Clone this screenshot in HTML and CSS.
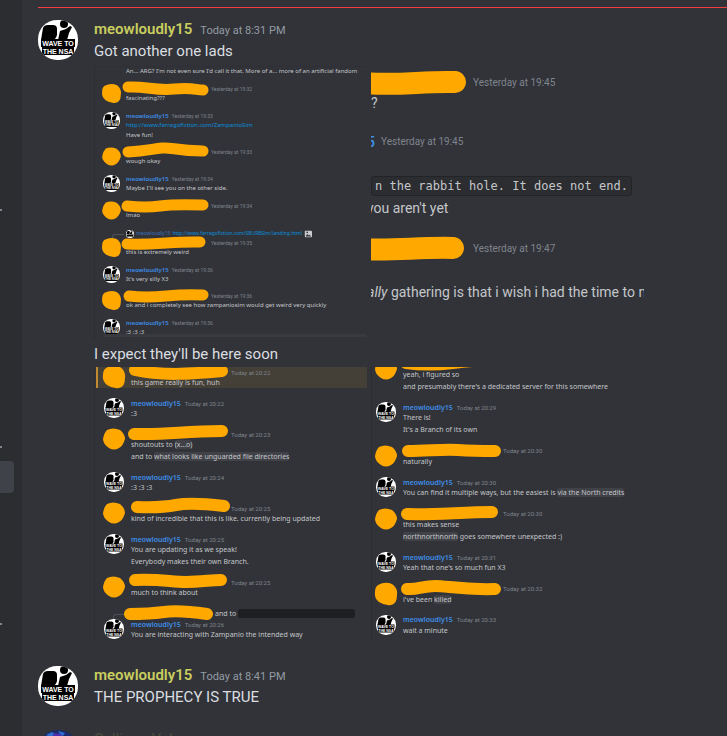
FILE: index.html
```
<!DOCTYPE html>
<html lang="en">
<head>
  <meta charset="UTF-8">
  <title>Chat</title>
  <link rel="stylesheet" href="styles.css">
</head>
<body>

  <!-- shared drawings -->
  <svg class="defs" aria-hidden="true">
    <symbol id="nsa" viewBox="0 0 40 40">
      <clipPath id="round"><rect width="40" height="40" rx="19"/></clipPath>
      <g clip-path="url(#round)">
        <rect width="40" height="40" fill="#fff"/>
        <path d="M5 8q1-3 5-3h5q4 0 4 4v6q-1 4-4 5H3z" fill="#000"/>
        <circle cx="26" cy="4" r="4" fill="#000"/>
        <path d="M20 20l2-9 6-2 4-3 2 1-3 6-2 7z" fill="#000"/>
        <path d="M3 19h34v8h-1v8H4v-8H3z" fill="#000"/>
        <text x="20" y="26" class="nsa-text">WAVE TO</text>
        <text x="20" y="34" class="nsa-text">THE NSA</text>
      </g>
    </symbol>
    <symbol id="blob-a" viewBox="0 0 20 20" overflow="visible">
      <path d="M2 1Q9-3 16 0q6 4 5 11 0 9-6 10-6 1-12-3-5-4-4-10Q-1 3 2 1z"/>
    </symbol>
    <symbol id="blob-b" viewBox="0 0 20 20" overflow="visible">
      <path d="M3 1q6-3 13 0 5 4 5 9-2 7-6 9-5 3-10 0-6-4-6-9 1-6 4-9z"/>
    </symbol>
  </svg>

  <nav class="sidebar">
    <span class="tick"></span>
    <span class="tick"></span>
    <span class="selected"></span>
    <span class="tick"></span>
  </nav>

  <main class="chat">
    <hr class="divider">

    <article class="message">
      <svg class="avatar"><use href="#nsa"/></svg>
      <div class="body">
        <header class="head"><b class="name">meowloudly15</b><time>Today at 8:31 PM</time></header>
        <p>Got another one lads</p>
        <div class="gallery">

          <figure class="shot shot-small">
            <p class="line">An... ARG? I'm not even sure I'd call it that. More of a... more of an artificial fandom</p>
            <div class="row">
              <svg class="pic ink"><use href="#blob-a"/></svg>
              <div>
                <div class="top"><svg class="scribble"><path d="M2 2C20 1 30 6 48 4S70 5 77 5"/></svg><time>Yesterday at 19:32</time></div>
                <p>fascinating???</p>
              </div>
            </div>
            <div class="row">
              <svg class="pic"><use href="#nsa"/></svg>
              <div>
                <div class="top"><b>meowloudly15</b><time>Yesterday at 19:33</time></div>
                <p><a href="#">http://www.farragofiction.com/ZampanioSim</a></p>
                <p>Have fun!</p>
              </div>
            </div>
            <div class="row">
              <svg class="pic ink"><use href="#blob-b"/></svg>
              <div>
                <div class="top"><svg class="scribble"><path d="M2 4C20 3 26 1 36 0S50 3 77 3"/></svg><time>Yesterday at 19:33</time></div>
                <p>wough okay</p>
              </div>
            </div>
            <div class="row">
              <svg class="pic"><use href="#nsa"/></svg>
              <div>
                <div class="top"><b>meowloudly15</b><time>Yesterday at 19:34</time></div>
                <p>Maybe I'll see you on the other side.</p>
              </div>
            </div>
            <div class="row">
              <svg class="pic ink"><use href="#blob-b"/></svg>
              <div>
                <div class="top"><svg class="scribble"><path d="M1 4Q20 6 34 4T77 3"/></svg><time>Yesterday at 19:34</time></div>
                <p>lmao</p>
              </div>
            </div>
            <div class="thread">
              <div class="reply">
                <span class="elbow"></span>
                <svg class="mini"><use href="#nsa"/></svg>
                <b>meowloudly15</b>
                <a href="#">http://www.farragofiction.com/SBURBSim/landing.html</a>
                <svg class="mini" viewBox="0 0 10 10"><rect x="1" y="1" width="9" height="8" rx="1" fill="#c9cbd0"/><path d="M2 8l2-3 2 2 1-1 2 2z" fill="#313338"/><circle cx="4" cy="3" r="1" fill="#313338"/></svg>
              </div>
              <div class="row">
                <svg class="pic ink"><use href="#blob-a"/></svg>
                <div>
                  <div class="top"><svg class="scribble"><path d="M1 5C30 6 50 2 74 3"/></svg><time>Yesterday at 19:35</time></div>
                  <p>this is extremely weird</p>
                </div>
              </div>
            </div>
            <div class="row">
              <svg class="pic"><use href="#nsa"/></svg>
              <div>
                <div class="top"><b>meowloudly15</b><time>Yesterday at 19:36</time></div>
                <p>It's very silly X3</p>
              </div>
            </div>
            <div class="row">
              <svg class="pic ink"><use href="#blob-a"/></svg>
              <div>
                <div class="top"><svg class="scribble"><path d="M3 4Q20 6 40 4T77 3"/></svg><time>Yesterday at 19:36</time></div>
                <p>ok and i completely see how zampaniosim would get weird very quickly</p>
              </div>
            </div>
            <div class="row">
              <svg class="pic"><use href="#nsa"/></svg>
              <div>
                <div class="top"><b>meowloudly15</b><time>Yesterday at 19:36</time></div>
                <p>:3 :3 :3</p>
              </div>
            </div>
            <div class="typebar"></div>
          </figure>

          <figure class="shot shot-large">
            <div class="top"><svg class="scribble"><path d="M-10 18C30 21 50 16 84 17"/></svg><time>Yesterday at 19:45</time></div>
            <p>?</p>
            <div class="top second"><b class="cut">5</b><time>Yesterday at 19:45</time></div>
            <code>n the rabbit hole. It does not end.</code>
            <p class="cut">you aren't yet</p>
            <div class="top third"><svg class="scribble"><path d="M-10 18C20 20 50 16 82 17"/></svg><time>Yesterday at 19:47</time></div>
            <p class="cut last"><i>ally</i> gathering is that i wish i had the time to n</p>
          </figure>
        </div>

        <p>I expect they'll be here soon</p>
        <div class="gallery">

          <figure class="shot shot-mid">
            <div class="row mention">
              <svg class="pic ink"><use href="#blob-a"/></svg>
              <div>
                <div class="top"><svg class="scribble"><path d="M4 3C30 9 60 7 91 4"/></svg><time>Today at 20:22</time></div>
                <p>this game really is fun, huh</p>
              </div>
            </div>
            <div class="row">
              <svg class="pic"><use href="#nsa"/></svg>
              <div>
                <div class="top"><b>meowloudly15</b><time>Today at 20:22</time></div>
                <p>:3</p>
              </div>
            </div>
            <div class="row">
              <svg class="pic ink"><use href="#blob-b"/></svg>
              <div>
                <div class="top"><svg class="scribble"><path d="M3 5C40 6 50 2 91 2"/></svg><time>Today at 20:23</time></div>
                <p>shoutouts to <mark>(x...o)</mark></p>
                <p>and to <mark>what looks like unguarded file directories</mark></p>
              </div>
            </div>
            <div class="row">
              <svg class="pic"><use href="#nsa"/></svg>
              <div>
                <div class="top"><b>meowloudly15</b><time>Today at 20:24</time></div>
                <p>:3 :3 :3</p>
              </div>
            </div>
            <div class="row">
              <svg class="pic ink"><use href="#blob-b"/></svg>
              <div>
                <div class="top"><svg class="scribble"><path d="M6 4Q30 5 45 2T93 3"/></svg><time>Today at 20:25</time></div>
                <p>kind of incredible that this is like. currently being updated</p>
              </div>
            </div>
            <div class="row">
              <svg class="pic"><use href="#nsa"/></svg>
              <div>
                <div class="top"><b>meowloudly15</b><time>Today at 20:25</time></div>
                <p>You are updating it as we speak!</p>
                <p>Everybody makes their own Branch.</p>
              </div>
            </div>
            <div class="row">
              <svg class="pic ink"><use href="#blob-b"/></svg>
              <div>
                <div class="top"><svg class="scribble"><path d="M4 3C30 2 40 5 55 5S80 3 90 3"/></svg><time>Today at 20:25</time></div>
                <p>much to think about</p>
              </div>
            </div>
            <div class="thread">
              <div class="reply">
                <span class="elbow"></span>
                <svg class="scribble"><path d="M1 5Q20 5 35 3T78 5"/></svg>
                <span>and to</span>
                <span class="spoiler"></span>
              </div>
              <div class="row">
                <svg class="pic"><use href="#nsa"/></svg>
                <div>
                  <div class="top"><b>meowloudly15</b><time>Today at 20:26</time></div>
                  <p>You are interacting with Zampanio the intended way</p>
                </div>
              </div>
            </div>
          </figure>

          <figure class="shot shot-mid shot-right">
            <div class="row">
              <svg class="pic ink"><use href="#blob-b"/></svg>
              <div>
                <div class="top"><svg class="scribble"><path d="M3 4Q25 7 50 4T90 1"/></svg></div>
                <p>yeah, i figured so</p>
                <p>and presumably there's a dedicated server for this somewhere</p>
              </div>
            </div>
            <div class="row">
              <svg class="pic"><use href="#nsa"/></svg>
              <div>
                <div class="top"><b>meowloudly15</b><time>Today at 20:29</time></div>
                <p>There is!</p>
                <p>It's a Branch of its own</p>
              </div>
            </div>
            <div class="row">
              <svg class="pic ink"><use href="#blob-b"/></svg>
              <div>
                <div class="top"><svg class="scribble"><path d="M5 5C25 5 40 3 55 4S80 5 92 5"/></svg><time>Today at 20:30</time></div>
                <p>naturally</p>
              </div>
            </div>
            <div class="row">
              <svg class="pic"><use href="#nsa"/></svg>
              <div>
                <div class="top"><b>meowloudly15</b><time>Today at 20:30</time></div>
                <p>You can find it multiple ways, but the easiest is <mark>via the North credits</mark></p>
              </div>
            </div>
            <div class="row">
              <svg class="pic ink"><use href="#blob-b"/></svg>
              <div>
                <div class="top"><svg class="scribble"><path d="M4 5C30 6 60 3 89 3"/></svg><time>Today at 20:30</time></div>
                <p>this makes sense</p>
                <p><mark>northnorthnorth</mark> goes somewhere unexpected :)</p>
              </div>
            </div>
            <div class="row">
              <svg class="pic"><use href="#nsa"/></svg>
              <div>
                <div class="top"><b>meowloudly15</b><time>Today at 20:31</time></div>
                <p>Yeah that one's so much fun X3</p>
              </div>
            </div>
            <div class="row">
              <svg class="pic ink"><use href="#blob-a"/></svg>
              <div>
                <div class="top"><svg class="scribble"><path d="M4 5C14 6 20 2 32 2S60 6 92 5"/></svg><time>Today at 20:32</time></div>
                <p>i've been <mark>killed</mark></p>
              </div>
            </div>
            <div class="row">
              <svg class="pic"><use href="#nsa"/></svg>
              <div>
                <div class="top"><b>meowloudly15</b><time>Today at 20:33</time></div>
                <p>wait a minute</p>
              </div>
            </div>
          </figure>
        </div>
      </div>
    </article>

    <article class="message">
      <svg class="avatar"><use href="#nsa"/></svg>
      <div class="body">
        <header class="head"><b class="name">meowloudly15</b><time>Today at 8:41 PM</time></header>
        <p>THE PROPHECY IS TRUE</p>
      </div>
    </article>

    <article class="message">
      <svg class="avatar" viewBox="0 0 40 40"><circle cx="20" cy="20" r="20" fill="#1c2a6e"/><path d="M8 5l6-3 4 3-5 2zM20 1l7 2-3 4z" fill="#2f6fd0"/><path d="M16 3l6 1 4 3H14z" fill="#4a2fb0"/></svg>
      <div class="body">
        <header class="head"><span class="name dim">Calliope Valmer</span></header>
      </div>
    </article>
  </main>

</body>
</html>
```

FILE: styles.css
```
* { box-sizing: border-box; }
body {
  margin: 0;
  height: 100vh;
  overflow: hidden;
  display: flex;
  background: #313338;
  color: #dbdee1;
  font: 15px/22px Roboto, sans-serif;
}
p, figure { margin: 0; }
a { color: #0a8fdc; text-decoration: none; }
.defs { position: absolute; width: 0; height: 0; }
.nsa-text {
  font: bold 7px "Liberation Sans", sans-serif;
  fill: #fff;
  text-anchor: middle;
}

/* channel list edge */
.sidebar {
  flex: none;
  width: 22px;
  padding-top: 209px;
  display: flex;
  flex-direction: column;
  background: #2b2d31;
}
.tick { width: 2px; height: 2px; background: #80848e; }
.tick + .tick { margin-top: 235px; }
.selected { width: 14px; height: 32px; margin: 13px 0 130px; background: #404249; border-radius: 0 4px 4px 0; }

/* messages */
.chat { flex: 1; min-width: 0; padding-left: 16px; overflow: hidden; }
.divider { height: 1px; margin: 7px 0 10px; border: 0; background: #f23f43; }
.message { display: flex; gap: 16px; margin-bottom: 20px; }
.avatar { flex: none; width: 40px; height: 40px; margin-top: 2px; }
.body { flex: 1; max-width: 550px; }
.head { display: flex; align-items: baseline; gap: 8px; height: 22px; }
.name { font-weight: 600; color: #c9cd5f; }
.name.dim { font-weight: 400; color: #4b4d3b; }
.head time { font-size: 11px; color: #949ba4; }

/* pictures */
.gallery { display: grid; grid-template-columns: 1fr 1fr; gap: 4px; padding: 4px 0; }
.gallery + p + .gallery { padding-top: 2px; }
.shot { aspect-ratio: 1; overflow: hidden; white-space: nowrap; color: #c4c6ca; }
.shot b { color: #3f8ee8; font-weight: 600; }
.shot time { color: #80848e; font-family: Roboto, sans-serif; }
.shot mark { background: #404248; color: inherit; border-radius: 2px; }
.ink, .scribble { fill: #ffa800; overflow: visible; }
.scribble path { fill: none; stroke: #ffa800; stroke-linecap: round; stroke-linejoin: round; }

.shot-small, .shot-mid {
  display: flex;
  flex-direction: column;
  justify-content: space-between;
  border-left: 1px solid #2b2d31;
  font-family: "Noto Sans", sans-serif;
}
.row { display: flex; }
.pic { flex: none; }
.top { display: flex; align-items: center; }
.reply { display: flex; align-items: center; gap: 2px; }
.elbow { align-self: flex-end; border: solid #4e5058; border-width: 1px 0 0 1px; border-radius: 3px 0 0 0; }

.shot-small { padding-bottom: 2px; font-size: 6px; line-height: 9px; border-top: 1px solid #2e3035; }
.shot-small .line { padding-left: 31px; }
.shot-small .row { padding-left: 8px; gap: 6px; }
.shot-small .pic { width: 17px; height: 17px; }
.shot-small .top { height: 9px; gap: 3px; }
.shot-small .scribble { width: 82px; height: 9px; stroke-width: 11px; }
.shot-small time { font-size: 5px; }
.shot-small p + p { padding-top: 1px; }
.shot-small .reply { height: 10px; font-size: 5px; }
.shot-small .elbow { width: 12px; height: 5px; margin-left: 17px; }
.shot-small .reply b { opacity: .7; font-weight: 400; }
.mini { width: 8px; height: 8px; }
.typebar { flex: none; height: 3px; margin: -12px 0 0 8px; background: #383a40; border-radius: 3px 3px 0 0; }

.shot-mid { font-size: 7px; line-height: 11px; }
.shot-mid .row { padding-left: 9px; gap: 7px; }
.shot-mid .pic { width: 20px; height: 20px; }
.shot-mid .top { height: 10px; gap: 4px; }
.shot-mid .scribble { width: 96px; height: 10px; stroke-width: 12px; }
.shot-mid time { font-size: 6px; }
.shot-mid p + p { padding-top: 1px; }
.shot-mid .mention { margin-left: 1px; padding-left: 6px; border-left: 2px solid #c08a30; background: #444037; }
.shot-mid .elbow { width: 14px; height: 5px; margin-left: 18px; }
.shot-mid .reply .scribble { width: 84px; }
.spoiler { width: 117px; height: 9px; background: #1e1f22; border-radius: 2px; }
.shot-right { padding-bottom: 4px; }
.shot-right .row { padding-left: 4px; }
.shot-right .row:first-child { margin-top: -8px; }

/* enlarged, cropped on both sides */
.shot-large { padding-top: 7px; font-size: 14px; line-height: 20px; }
.shot-large .top { height: 20px; gap: 6px; }
.shot-large .scribble { width: 96px; height: 36px; stroke-width: 22px; }
.shot-large time { font-size: 10px; }
.shot-large .cut { margin-left: -4px; }
.shot-large .second { margin-top: 19px; }
.shot-large .third { margin-top: 21px; }
.shot-large .last { margin-top: 23px; }
.shot-large code {
  display: block;
  width: fit-content;
  margin: 24px 0 2px;
  padding: 0 3px;
  border: 1px solid #232428;
  border-radius: 3px;
  background: #2b2d31;
  font: 12px/18px "DejaVu Sans Mono", monospace;
}
```
